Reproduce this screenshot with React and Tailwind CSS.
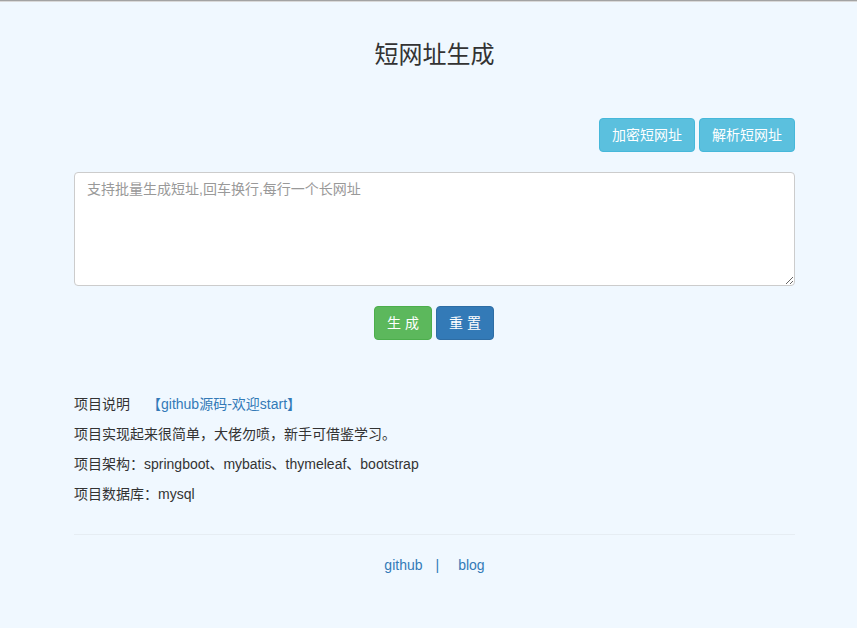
import React from 'react';

const font = { fontFamily: '"Liberation Sans", "Noto Sans CJK SC", sans-serif' };

const App = () => {
  return (
    <div className="min-h-[628px] bg-[#f0f8ff] text-[14px] leading-[20px] text-[#333]" style={font}>
      {/* browser edge */}
      <div className="h-px bg-[#a3a3a3]" />
      <div className="h-px bg-[#d9d9d9]" />

      <div className="ml-[74px] w-[721px] pt-[40px]">
        <h1 className="text-center text-[24px] leading-[26px] font-normal text-[#333]">短网址生成</h1>

        {/* top actions */}
        <div className="mt-[50px] flex justify-end gap-[4px]">
          <button className="h-[34px] rounded-[4px] border border-[#46b8da] bg-[#5bc0de] px-[12px] text-[14px] text-white">
            加密短网址
          </button>
          <button className="h-[34px] rounded-[4px] border border-[#46b8da] bg-[#5bc0de] px-[12px] text-[14px] text-white">
            解析短网址
          </button>
        </div>

        <textarea
          className="mt-[20px] block h-[114px] w-full rounded-[4px] border border-[#ccc] bg-white px-[12px] py-[6px] text-[14px] leading-[20px] text-[#555] placeholder:text-[#999] outline-none"
          placeholder="支持批量生成短址,回车换行,每行一个长网址"
        />

        <div className="mt-[20px] flex justify-center gap-[4px] pr-px">
          <button className="h-[34px] w-[58px] rounded-[4px] border border-[#4cae4c] bg-[#5cb85c] text-[14px] text-white">
            生 成
          </button>
          <button className="h-[34px] w-[58px] rounded-[4px] border border-[#2e6da4] bg-[#337ab7] text-[14px] text-white">
            重 置
          </button>
        </div>

        {/* project info */}
        <div className="mt-[54px]">
          <p className="mb-[10px]">
            项目说明
            <a href="#" className="ml-[17px] text-[#337ab7]">【github源码-欢迎start】</a>
          </p>
          <p className="mb-[10px]">项目实现起来很简单，大佬勿喷，新手可借鉴学习。</p>
          <p className="mb-[10px]">项目架构：springboot、mybatis、thymeleaf、bootstrap</p>
          <p>项目数据库：mysql</p>
        </div>

        <hr className="mt-[30px] border-0 border-t border-[#e6edf3]" />

        <div className="mt-[20px] flex justify-center text-[#337ab7]">
          <a href="#">github</a>
          <span className="ml-[13px]">|</span>
          <a href="#" className="ml-[19px]">blog</a>
        </div>
      </div>
    </div>
  );
};

export default App;
